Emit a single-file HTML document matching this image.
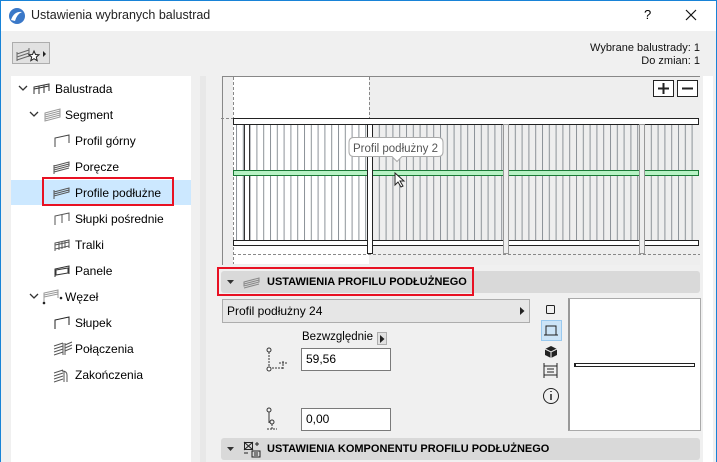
<!DOCTYPE html>
<html><head><meta charset="utf-8"><style>
*{margin:0;padding:0;box-sizing:border-box}
body{width:717px;height:462px;overflow:hidden;background:#f0f0f0;font-family:"Liberation Sans","DejaVu Sans",sans-serif;font-size:12px;color:#000;position:relative}
.a{position:absolute}
#title{left:0;top:0;width:717px;height:31px;background:#fff}
#frame{left:0;top:0;width:717px;height:462px;border:1px solid #1883d7;border-bottom:none;pointer-events:none}
.tr{position:absolute;left:11px;width:180px;height:26px;line-height:26px;font-size:12px}
.hdr{position:absolute;left:221px;width:479px;height:22px;background:#d9d9d9;border-radius:3px;font-weight:bold;font-size:11px;line-height:22px}
.inp{position:absolute;background:#fff;border:1px solid #7a7a7a;height:23px;line-height:21px;padding-left:4px;font-size:12px}
.chev{position:absolute;top:9px}
</style></head><body>
<div id="title" class="a"></div>
<svg class="a" style="left:8px;top:7px" width="18" height="18" viewBox="0 0 18 18"><circle cx="9" cy="9" r="8" fill="#3a78c8"/><path d="M3 13 Q6 4 14 5 Q9 7 7 14Z" fill="#fff"/></svg>
<div class="a" style="left:31px;top:8px;font-size:12.5px;color:#222">Ustawienia wybranych balustrad</div>
<div class="a" style="left:644px;top:7px;font-size:13px">?</div>
<svg class="a" style="left:685px;top:9px" width="12" height="12"><path d="M1 1l10 10M11 1L1 11" stroke="#111" stroke-width="1.2"/></svg>

<div class="a" style="left:12px;top:42px;width:38px;height:22px;border:1px solid #adadad;background:#e1e1e1"></div>
<svg class="a" style="left:14px;top:44px" width="36" height="20"><path d="M3 10 L15 6 M3 13 L15 9 M3 16 L15 12 M3 8v9 M15 4v9" stroke="#666" fill="none"/><path d="M20 7 l1.5 3.5 3.5.3-2.7 2.3.9 3.6-3.2-2-3.2 2 .9-3.6-2.7-2.3 3.5-.3z" fill="#fff" stroke="#222"/><path d="M29 7 l3 3-3 3z" fill="#222"/></svg>

<div class="a" style="right:17px;top:42px;font-size:11px;text-align:right;line-height:13px;color:#111">Wybrane balustrady: 1<br>Do zmian: 1</div>

<div class="a" style="left:11px;top:76px;width:180px;height:386px;background:#fff"></div>
<div class="a" style="left:200px;top:76px;width:6px;height:386px;background:#e8e8e8"></div>
<div class="a" style="left:11px;top:180px;width:180px;height:25px;background:#cce8ff"></div>
<div class="a" style="left:42px;top:177px;width:132px;height:29px;border:2px solid #e81123"></div>

<div class="tr" style="top:76px"><svg class="chev" style="left:7px" width="10" height="7"><path d="M1 1l4 4 4-4" stroke="#333" stroke-width="1.3" fill="none"/></svg><svg class="a" style="left:22px;top:7px" width="18" height="12"><path d="M1 11V4l15-3v7M6 3v8M11 2v8M1 6l15-3" stroke="#333" fill="none"/></svg><span class="a" style="left:44px">Balustrada</span></div>
<div class="tr" style="top:102px"><svg class="chev" style="left:18px" width="10" height="7"><path d="M1 1l4 4 4-4" stroke="#333" stroke-width="1.3" fill="none"/></svg><svg class="a" style="left:33px;top:6px" width="18" height="14"><path d="M1 5l15-4v8L1 13zM1 7l15-4M1 9l15-4M1 11l15-4" stroke="#999" fill="none"/></svg><span class="a" style="left:54px">Segment</span></div>
<div class="tr" style="top:128px"><svg class="a" style="left:42px;top:6px" width="18" height="14"><path d="M2 13V4l14-3v8" stroke="#444" fill="none"/></svg><span class="a" style="left:64px">Profil górny</span></div>
<div class="tr" style="top:154px"><svg class="a" style="left:42px;top:7px" width="18" height="14"><path d="M1 5l15-4v4L1 9zM1 7l15-4M1 11l15-4M1 4v9" stroke="#555" fill="none"/></svg><span class="a" style="left:64px">Poręcze</span></div>
<div class="tr" style="top:180px"><svg class="a" style="left:42px;top:6px" width="18" height="14"><path d="M1 6l15-4v4L1 10zM1 8l15-4M1 4v9" stroke="#555" fill="none"/></svg><span class="a" style="left:64px">Profile podłużne</span></div>
<div class="tr" style="top:206px"><svg class="a" style="left:42px;top:6px" width="18" height="14"><path d="M2 13V4l14-3v8M9 3v8" stroke="#555" fill="none"/></svg><span class="a" style="left:64px">Słupki pośrednie</span></div>
<div class="tr" style="top:232px"><svg class="a" style="left:42px;top:6px" width="18" height="14"><path d="M2 13V5l14-3v8M2 7l14-3M2 11l14-3M6 4v8M9 4v7M12 3v7" stroke="#555" fill="none"/></svg><span class="a" style="left:64px">Tralki</span></div>
<div class="tr" style="top:258px"><svg class="a" style="left:42px;top:6px" width="18" height="14"><path d="M2 13V5l14-3v8M3 6l12-2v5L3 11z" stroke="#333" fill="none"/></svg><span class="a" style="left:64px">Panele</span></div>
<div class="tr" style="top:284px"><svg class="chev" style="left:18px" width="10" height="7"><path d="M1 1l4 4 4-4" stroke="#333" stroke-width="1.3" fill="none"/></svg><svg class="a" style="left:31px;top:5px" width="22" height="16"><path d="M2 14V4l14-3v8M2 6l14-3M2 8l14-3" stroke="#999" fill="none"/><circle cx="2" cy="14" r="1.3" fill="#222"/><circle cx="19" cy="9" r="1.3" fill="#222"/></svg><span class="a" style="left:54px">Węzeł</span></div>
<div class="tr" style="top:310px"><svg class="a" style="left:42px;top:6px" width="18" height="14"><path d="M2 13V4l14-3v8" stroke="#222" fill="none"/></svg><span class="a" style="left:64px">Słupek</span></div>
<div class="tr" style="top:336px"><svg class="a" style="left:42px;top:5px" width="20" height="16"><path d="M1 5l9-3M1 8l9-3M1 11l9-3M1 14l9-3M10 2v12M12 2v12M12 4l7-3M12 7l7-3M12 10l7-3" stroke="#555" fill="none"/></svg><span class="a" style="left:64px">Połączenia</span></div>
<div class="tr" style="top:362px"><svg class="a" style="left:42px;top:5px" width="18" height="16"><path d="M1 6l9-3M1 9l9-3M1 12l9-3M1 15l9-3M9 4q5 0 5 4v7M11 4v11" stroke="#555" fill="none"/></svg><span class="a" style="left:64px">Zakończenia</span></div>

<div class="a" style="left:703px;top:76px;width:10px;height:386px;background:#fff"></div>

<svg class="a" style="left:221px;top:76px" width="480" height="190" viewBox="221 76 480 190">
<defs><pattern id="bal" x="236" y="0" width="6.8" height="10" patternUnits="userSpaceOnUse"><rect x="0" y="0" width="1" height="10" fill="#8c9298"/></pattern></defs>
<rect x="221" y="76" width="479" height="189" fill="#eeeeee"/>
<rect x="233" y="77" width="136" height="187" fill="#fff"/>
<path d="M222.5 76v189M222 76.5h478" stroke="#888" stroke-width="1"/>
<path d="M233.5 77v187M369.5 77v46M221 118.5h12M233 254.5h467" stroke="#888" stroke-dasharray="3 2" fill="none"/>
<rect x="236" y="124" width="462" height="117" fill="url(#bal)"/>
<path d="M244.5 124v117M249.5 124v117" stroke="#333"/>
<rect x="233.5" y="118.5" width="465" height="6" fill="#fff" stroke="#222"/>
<rect x="233.5" y="240.5" width="465" height="5" fill="#fff" stroke="#222"/>
<rect x="233.5" y="170.5" width="465" height="5" fill="#b7f2c4" stroke="#1a7a36"/>
<rect x="367.5" y="124.5" width="5" height="129" fill="#fff" stroke="#222"/>
<rect x="503.5" y="124.5" width="5" height="129" fill="#eee" stroke="#999"/>
<rect x="639.5" y="124.5" width="5" height="129" fill="#eee" stroke="#999"/>
<rect x="653.5" y="80.5" width="20" height="16" fill="#fff" stroke="#222"/>
<path d="M658 88.5h11M663.5 83v11" stroke="#222" stroke-width="2"/>
<rect x="677.5" y="80.5" width="20" height="16" fill="#fff" stroke="#222"/>
<path d="M682 88.5h11" stroke="#222" stroke-width="2"/>
<path d="M354 137.5h84q5 0 5 5v9q0 5-5 5h-36l-5 5-5-5h-38q-5 0-5-5v-9q0-5 5-5z" fill="#fff" stroke="#aaa"/>
<text x="353" y="152" font-family="Liberation Sans,sans-serif" font-size="11.5" fill="#555">Profil podłużny 2</text>
<path d="M395 173v12l3-3 3 5 2-1-3-5h4z" fill="#fff" stroke="#222"/>
</svg>

<div class="a" style="left:217px;top:267px;width:257px;height:29px;border:2px solid #e81123;z-index:2"></div>
<div class="hdr" style="top:271px"><svg class="a" style="left:6px;top:9px" width="8" height="5"><path d="M0 0h7l-3.5 4z" fill="#333"/></svg><svg class="a" style="left:22px;top:5px" width="18" height="13"><path d="M1 6l15-4v4L1 10zM1 8l15-4M1 12l15-4" stroke="#888" fill="none"/></svg><span class="a" style="left:46px">USTAWIENIA PROFILU PODŁUŻNEGO</span></div>

<div class="a" style="left:222px;top:299px;width:308px;height:24px;background:#e6e6e6;border:1px solid #adadad;line-height:22px;padding-left:4px;font-size:12px">Profil podłużny 24<svg class="a" style="right:4px;top:7px" width="5" height="8"><path d="M0 0l4.5 4L0 8z" fill="#222"/></svg></div>
<div class="a" style="left:302px;top:331px;font-size:11.5px">Bezwzględnie</div>
<div class="a" style="left:377px;top:332px;width:10px;height:13px;background:#e1e1e1;border:1px solid #adadad"><svg class="a" style="left:2px;top:2px" width="5" height="8"><path d="M0 0l4.5 4L0 8z" fill="#222"/></svg></div>
<svg class="a" style="left:265px;top:347px" width="26" height="26"><circle cx="4" cy="3" r="2" fill="none" stroke="#333"/><path d="M4 5v17M4 21h14M14 16h8M18 14v8" stroke="#333" stroke-dasharray="2 1" fill="none"/><circle cx="4" cy="22" r="2" fill="#fff" stroke="#333"/></svg>
<div class="inp" style="left:301px;top:348px;width:90px">59,56</div>
<svg class="a" style="left:265px;top:407px" width="20" height="26"><circle cx="4" cy="3" r="2" fill="none" stroke="#333"/><path d="M4 5v11" stroke="#333"/><circle cx="7" cy="15" r="2" fill="none" stroke="#333"/><path d="M2 22h10M7 17v5" stroke="#333" stroke-dasharray="2 1"/></svg>
<div class="inp" style="left:301px;top:408px;width:90px">0,00</div>

<svg class="a" style="left:540px;top:300px" width="22" height="108">
<rect x="6.5" y="5.5" width="8" height="8" rx="1" fill="none" stroke="#222"/>
<rect x="1.5" y="20.5" width="20" height="20" fill="#cce4f7" stroke="#99c9ef"/>
<path d="M6 35v-9h10v9M4 35h14" stroke="#222" fill="none"/>
<path d="M11 46l6 3v6l-6 3-6-3v-6z" fill="#222"/><path d="M5 49l6 3 6-3M11 52v6" stroke="#eee" fill="none"/>
<path d="M4 63v15M17 63v15M4 66h13M4 75h13M7 69h7M7 72h7" stroke="#222" fill="none"/>
<circle cx="11" cy="96" r="7.5" fill="none" stroke="#222"/><path d="M11 94v6M11 91v1" stroke="#222" stroke-width="1.5"/>
</svg>
<div class="a" style="left:568px;top:298px;width:133px;height:133px;background:#fff;border:1px solid #aaa;border-left:2px solid #999"></div>
<div class="a" style="left:574px;top:363px;width:121px;height:4px;border:1px solid #222;border-left-width:2px;background:#fff"></div>

<div class="hdr" style="top:438px"><svg class="a" style="left:6px;top:9px" width="8" height="5"><path d="M0 0h7l-3.5 4z" fill="#333"/></svg><svg class="a" style="left:22px;top:3px" width="18" height="17"><rect x="1.5" y="1.5" width="8" height="7" fill="none" stroke="#222"/><path d="M1 1l9 8M10 1l-9 8M12 3h4M14 1v4M1 12h4M9 10h8v6H9zM11 12h4M11 14h4" stroke="#222" fill="none"/></svg><span class="a" style="left:46px">USTAWIENIA KOMPONENTU PROFILU PODŁUŻNEGO</span></div>

<div id="frame" class="a"></div>
</body></html>
